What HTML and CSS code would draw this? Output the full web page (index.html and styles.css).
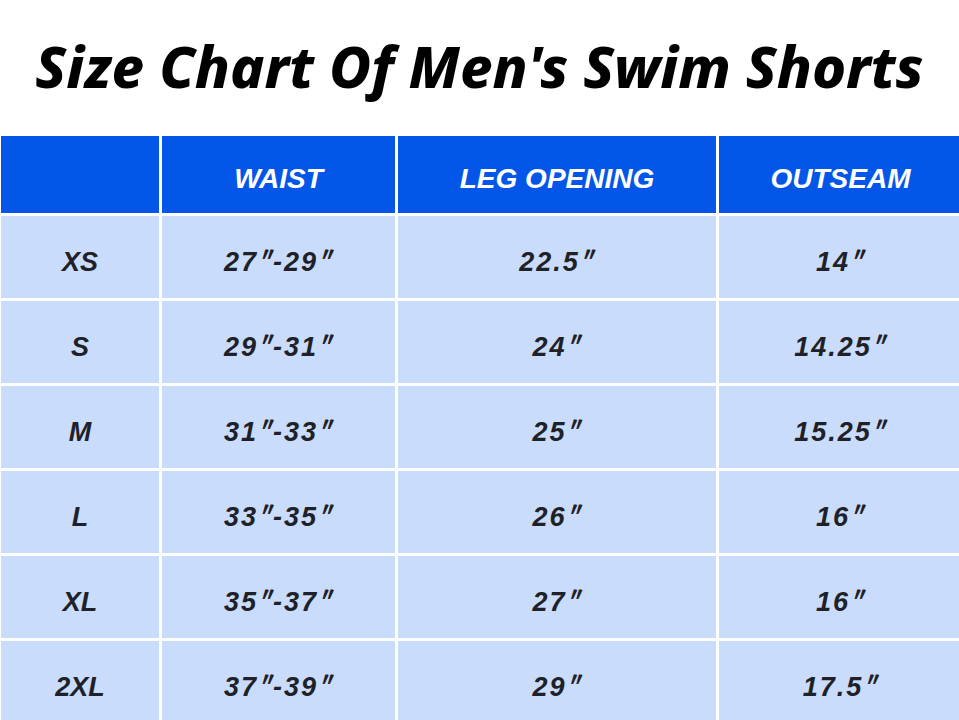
FILE: index.html
```html
<!DOCTYPE html>
<html>
<head>
<meta charset="utf-8">
<link rel="stylesheet" href="styles.css">
</head>
<body>
<div class="page">
  <h1 class="title">Size Chart Of Men's Swim Shorts</h1>
  <div class="chart">
    <div class="cell head"></div>
    <div class="cell head">WAIST</div>
    <div class="cell head">LEG OPENING</div>
    <div class="cell head">OUTSEAM</div>

    <div class="cell size">XS</div>
    <div class="cell">27<span class="q">″</span>-29<span class="q">″</span></div>
    <div class="cell">22.5<span class="q">″</span></div>
    <div class="cell">14<span class="q">″</span></div>

    <div class="cell size">S</div>
    <div class="cell">29<span class="q">″</span>-31<span class="q">″</span></div>
    <div class="cell">24<span class="q">″</span></div>
    <div class="cell">14.25<span class="q">″</span></div>

    <div class="cell size">M</div>
    <div class="cell">31<span class="q">″</span>-33<span class="q">″</span></div>
    <div class="cell">25<span class="q">″</span></div>
    <div class="cell">15.25<span class="q">″</span></div>

    <div class="cell size">L</div>
    <div class="cell">33<span class="q">″</span>-35<span class="q">″</span></div>
    <div class="cell">26<span class="q">″</span></div>
    <div class="cell">16<span class="q">″</span></div>

    <div class="cell size">XL</div>
    <div class="cell">35<span class="q">″</span>-37<span class="q">″</span></div>
    <div class="cell">27<span class="q">″</span></div>
    <div class="cell">16<span class="q">″</span></div>

    <div class="cell size">2XL</div>
    <div class="cell">37<span class="q">″</span>-39<span class="q">″</span></div>
    <div class="cell">29<span class="q">″</span></div>
    <div class="cell">17.5<span class="q">″</span></div>
  </div>
</div>
</body>
</html>
```
FILE: styles.css
```css
html, body {
  margin: 0;
  padding: 0;
  background: #ffffff;
  overflow: hidden;
}
.page {
  width: 959px;
  height: 720px;
  overflow: hidden;
}
.title {
  margin: 0;
  height: 136px;
  box-sizing: border-box;
  padding-top: 26px;
  text-align: center;
  font-family: "Noto Sans", "Open Sans", sans-serif;
  font-weight: 800;
  font-style: italic;
  font-size: 57.5px;
  line-height: 80px;
  color: #000000;
}
.chart {
  display: grid;
  grid-template-columns: 158px 233px 318px 243px;
  grid-template-rows: 77px repeat(6, 82px);
  column-gap: 3px;
  row-gap: 3px;
  padding-left: 1px;
}
.cell {
  background: #cadcfb;
  display: flex;
  align-items: center;
  justify-content: center;
  padding-top: 10px;
  box-sizing: border-box;
  font-family: "Liberation Sans", Arial, sans-serif;
  font-weight: 700;
  font-style: italic;
  font-size: 27px;
  letter-spacing: 2px;
  color: #1e2128;
  white-space: pre;
}
.size {
  letter-spacing: 0;
}
.q {
  font-family: "Lato", sans-serif;
  font-size: 28px;
  margin-left: 1px;
  letter-spacing: 0;
}
.head {
  background: #0356e8;
  color: #ffffff;
  font-size: 28px;
  padding-top: 8px;
  letter-spacing: 0;
}
```
